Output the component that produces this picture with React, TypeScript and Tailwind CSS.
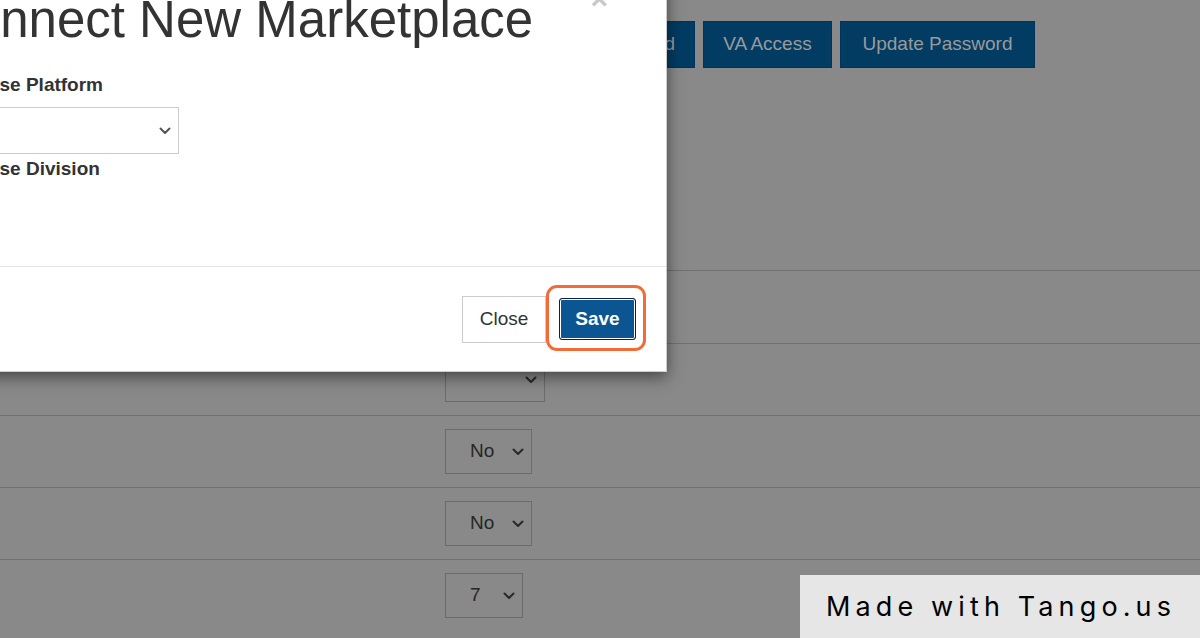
import React from "react";

const Chevron = ({ className = "" }: { className?: string }) => (
  <svg width="12" height="8" viewBox="0 0 12 8" className={className}>
    <path d="M1.5 1.5 L6 6 L10.5 1.5" fill="none" stroke="currentColor" strokeWidth="2" strokeLinecap="round" strokeLinejoin="round" />
  </svg>
);

type Row = { value: string; width: string; height: string };

const rows: Row[] = [
  { value: "", width: "w-[100px]", height: "h-[73px]" },
  { value: "", width: "w-[100px]", height: "h-[72px]" },
  { value: "No", width: "w-[87px]", height: "h-[72px]" },
  { value: "No", width: "w-[87px]", height: "h-[72px]" },
  { value: "7", width: "w-[78px]", height: "h-[72px]" },
];

const topButtons = [
  { label: "Update Card", width: "px-[19px]" },
  { label: "VA Access", width: "w-[129px]" },
  { label: "Update Password", width: "w-[195px]" },
];

export default function App() {
  return (
    <div className="relative w-[1200px] h-[638px] overflow-hidden bg-[#898989] font-['Liberation_Sans',Arial,sans-serif]">
      {/* page behind the overlay */}
      <div className="flex justify-end gap-2 pr-[165px] pt-[21px]">
        {topButtons.map((b) => (
          <button
            key={b.label}
            className={`${b.width} h-[47px] bg-[#023c63] border border-[#00345a] text-[19px] text-[#9a9a9a] whitespace-nowrap`}
          >
            {b.label}
          </button>
        ))}
      </div>

      <div className="mt-[202px]">
        {rows.map((row, i) => (
          <div key={i} className={`${row.height} border-t border-[#717171] flex items-center pl-[445px]`}>
            <div
              className={`${row.width} h-[45px] border border-[#6c6c6c] flex items-center justify-between pl-[24px] pr-[7px] text-[19px] text-[#262626]`}
            >
              <span>{row.value}</span>
              <Chevron className="text-[#2a2a2a]" />
            </div>
          </div>
        ))}
      </div>

      {/* modal */}
      <div className="absolute left-[-96px] top-[-20px] w-[763px] h-[392px] bg-white border border-black/20 shadow-[0_5px_15px_rgba(0,0,0,0.5)] flex flex-col">
        <div className="relative pt-[11px] pl-[30px]">
          <h4 className="text-[51px] leading-[56px] text-[#333] whitespace-nowrap">Connect New Marketplace</h4>
          <span className="absolute right-[58px] top-[3px] text-[30px] leading-none font-bold text-[#c9c9c9]">×</span>
        </div>

        <div className="h-[218px] pt-[24px] pl-[46px]">
          <label className="block text-[19px] leading-[25px] font-bold text-[#333] whitespace-nowrap">Choose Platform</label>
          <div className="mt-[10px] w-[228px] h-[47px] border border-[#cccccc] flex items-center justify-end pr-[7px]">
            <Chevron className="text-[#555]" />
          </div>
          <label className="block mt-[2px] text-[19px] leading-[25px] font-bold text-[#333] whitespace-nowrap">Choose Division</label>
        </div>

        <div className="flex-1 border-t border-[#e5e5e5] flex items-center justify-end gap-[13px] pr-[30px]">
          <button className="h-[47px] w-[84px] bg-white border border-[#cccccc] text-[19px] text-[#333]">Close</button>
          <div className="relative">
            <button className="h-[42px] w-[77px] rounded-[3px] bg-[#0b5592] border border-[#0f1f4a] shadow-[inset_0_0_0_1px_#ffffff] text-[19px] font-bold text-white">
              Save
            </button>
            <div className="absolute left-[-13px] right-[-10px] top-[-13px] bottom-[-11px] rounded-[11px] border-[3px] border-[#f26b38]" />
          </div>
        </div>
      </div>

      {/* watermark */}
      <div className="absolute left-[800px] top-[575px] w-[400px] h-[63px] bg-[#e6e6e6] pl-[26px] pt-[14px] font-['Inter',sans-serif] text-[27px] leading-[36px] tracking-[0.19em] text-black whitespace-nowrap">
        Made with Tango.us
      </div>
    </div>
  );
}
